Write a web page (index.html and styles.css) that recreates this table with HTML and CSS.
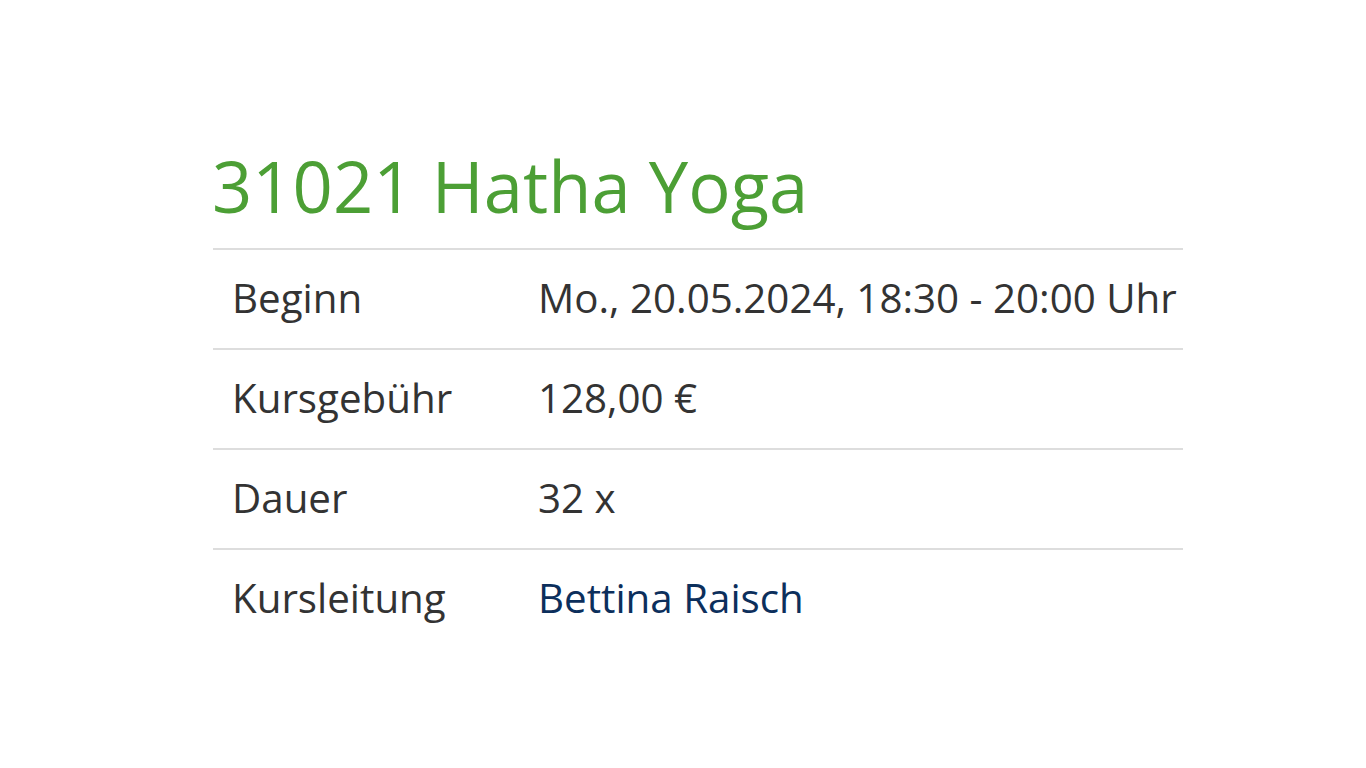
FILE: index.html
```html
<!DOCTYPE html>
<html lang="de">
<head>
<meta charset="utf-8">
<title>31021 Hatha Yoga</title>
<link rel="stylesheet" href="styles.css">
</head>
<body>
<main class="course">
  <h1 class="course-title">31021 Hatha Yoga</h1>
  <table class="course-table">
    <tbody>
      <tr><th>Beginn</th><td>Mo., 20.05.2024, 18:30 - 20:00 Uhr</td></tr>
      <tr><th>Kursgebühr</th><td>128,00 €</td></tr>
      <tr><th>Dauer</th><td>32 x</td></tr>
      <tr><th>Kursleitung</th><td><a class="lead" href="#">Bettina Raisch</a></td></tr>
    </tbody>
  </table>
</main>
</body>
</html>
```
FILE: styles.css
```css
html, body {
  margin: 0;
  padding: 0;
  background: #fff;
}
body {
  font-family: "Open Sans", "Liberation Sans", sans-serif;
  color: #333;
}
.course {
  width: 970px;
  margin: 0 0 0 213px;
  padding-top: 143px;
}
.course-title {
  margin: 0 0 19px -1px;
  font-size: 70.5px;
  font-weight: 400;
  line-height: 86px;
  color: #4c9f35;
}
.course-table {
  width: 100%;
  border-collapse: collapse;
  font-size: 40.3px;
}
.course-table th,
.course-table td {
  text-align: left;
  font-weight: 400;
  padding: 21px 0 23px 19px;
  line-height: 54px;
  border-top: 2px solid #ddd;
  vertical-align: middle;
}
.course-table th {
  width: 287px;
}
.lead {
  color: #0c2f5c;
  text-decoration: none;
}
```
